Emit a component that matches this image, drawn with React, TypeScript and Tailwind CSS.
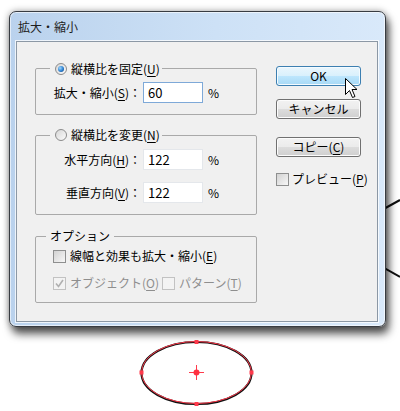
import React from 'react';

const U = ({ children }: { children: React.ReactNode }) => (
  <span className="underline decoration-1 underline-offset-[2px]">{children}</span>
);

const Radio = ({ checked }: { checked?: boolean }) => (
  <span className="inline-flex h-[12px] w-[12px] shrink-0 items-center justify-center rounded-full border border-[#8b8b8b] bg-[linear-gradient(135deg,#d6d6d6,#fbfbfb)]">
    {checked && (
      <span className="h-[6px] w-[6px] rounded-full bg-[radial-gradient(circle_at_35%_35%,#9fd8ff,#2a7fd0_55%,#0c3a75)]" />
    )}
  </span>
);

const Check = ({ checked, disabled }: { checked?: boolean; disabled?: boolean }) => (
  <span
    className={`inline-flex h-[13px] w-[13px] shrink-0 items-center justify-center border ${
      disabled
        ? 'border-[#c2c2c2] bg-[#f3f3f3]'
        : 'border-[#8e8f8f] bg-[linear-gradient(135deg,#d2d2d2,#f7f7f7)]'
    }`}
  >
    {checked && (
      <svg width="11" height="11" viewBox="0 0 11 11">
        <path d="M2 5.5 L4.5 8.5 L9 2" fill="none" stroke="#b0b0b0" strokeWidth="1.6" />
      </svg>
    )}
  </span>
);

const Field = ({ value, focused }: { value: string; focused?: boolean }) => (
  <div
    className={`ml-[2px] flex h-[21px] w-[60px] items-center bg-white pl-[4px] text-[13px] ${
      focused ? 'border border-[#7ea9d8]' : 'border border-[#e4e7eb]'
    }`}
  >
    {value}
  </div>
);

const Row = ({ label, value, focused }: { label: React.ReactNode; value: string; focused?: boolean }) => (
  <div className="flex h-[21px] items-center">
    <div className="w-[91px] whitespace-nowrap text-right">{label}</div>
    <Field value={value} focused={focused} />
    <span className="ml-[5px]">%</span>
  </div>
);

const Button = ({ children, hot }: { children: React.ReactNode; hot?: boolean }) => (
  <div
    className={`flex h-[20px] w-[85px] items-center justify-center rounded-[3px] border text-[12px] ${
      hot
        ? 'border-[#3c7fb1] bg-[linear-gradient(#eaf6fd_0%,#d9f0fc_50%,#bee6fd_50%,#a7d9f5_100%)] shadow-[inset_0_0_0_1px_#f4fbff]'
        : 'border-[#707070] bg-[linear-gradient(#f2f2f2_0%,#ebebeb_50%,#dddddd_50%,#cfcfcf_100%)] shadow-[inset_0_0_0_1px_#fcfcfc]'
    }`}
  >
    {children}
  </div>
);

const Cursor = () => (
  <svg className="absolute left-[345px] top-[78px] z-20" width="13" height="21" viewBox="0 0 13 21">
    <path d="M0.5 0.5 L0.5 16.5 L4.5 12.5 L7.5 19.5 L10 18.5 L7 11.5 L12 11.5 Z" fill="#fff" stroke="#000" strokeWidth="1" />
  </svg>
);

const Ellipse = () => (
  <svg className="ml-[124px] mt-[10px]" width="130" height="72" viewBox="0 0 130 72">
    <ellipse cx="63.5" cy="36" rx="55" ry="31" fill="none" stroke="#111" strokeWidth="2.2" />
    <ellipse cx="63.5" cy="35.5" rx="55" ry="31" fill="none" stroke="#ff3a4c" strokeWidth="1" />
    <rect x="61.5" y="3" width="4" height="4" fill="#ff3a4c" />
    <rect x="61.5" y="65" width="4" height="4" fill="#ff3a4c" />
    <rect x="6.5" y="33.5" width="4" height="4" fill="#ff3a4c" />
    <rect x="116.5" y="33.5" width="4" height="4" fill="#ff3a4c" />
    <line x1="56" y1="35.5" x2="71" y2="35.5" stroke="#ff3a4c" strokeWidth="1" />
    <line x1="63.5" y1="28" x2="63.5" y2="43" stroke="#ff3a4c" strokeWidth="1" />
    <circle cx="63.5" cy="35.5" r="3" fill="#ff3040" />
  </svg>
);

export default function App() {
  return (
    <div className="relative h-[411px] w-[400px] overflow-hidden bg-white pl-[9px] pt-[11px] font-['Noto_Sans_CJK_JP',sans-serif] text-[12px] leading-[16px] text-black">
      <svg className="pointer-events-none absolute left-0 top-0" width="400" height="411">
        <line x1="370" y1="216.5" x2="400" y2="200" stroke="#111" strokeWidth="2" />
        <line x1="370" y1="260" x2="400" y2="277" stroke="#111" strokeWidth="2" />
      </svg>

      <div className="relative z-10 flex h-[316px] w-[377px] flex-col rounded-[7px] border border-[#383c42] bg-[linear-gradient(90deg,#bad2ed,#cde1f6_55%,#d9e9fa)] shadow-[3px_7px_9px_rgba(0,0,0,0.65),0_0_7px_rgba(0,0,0,0.35),inset_0_0_0_1px_rgba(255,255,255,0.6)]">
        <div className="flex h-[29px] items-center pl-[8px] text-[12px] text-[#1e1e1e]">拡大・縮小</div>

        <div className="ml-[6px] flex h-[281px] w-[362px] border border-[#8c98a5] bg-[#f0f0f0] pl-[18px] shadow-[0_0_0_1px_rgba(255,255,255,0.75)]">
          <div className="flex w-[222px] flex-col pt-[17px]">
            <fieldset className="rounded-[2px] border border-[#a9a9a9] pb-[11px] pl-[14px] pr-[10px] pt-[5px]">
              <legend className="pl-[5px] pr-[2px]">
                <span className="inline-flex items-center gap-[4px]">
                  <Radio checked />
                  <span>縦横比を固定(<U>U</U>)</span>
                </span>
              </legend>
              <Row label={<>拡大・縮小(<U>S</U>)：</>} value="60" focused />
            </fieldset>

            <fieldset className="mt-[12px] rounded-[2px] border border-[#a9a9a9] pb-[11px] pl-[14px] pr-[10px] pt-[5px]">
              <legend className="pl-[5px] pr-[2px]">
                <span className="inline-flex items-center gap-[4px]">
                  <Radio />
                  <span>縦横比を変更(<U>N</U>)</span>
                </span>
              </legend>
              <div className="flex flex-col gap-[12px]">
                <Row label={<>水平方向(<U>H</U>)：</>} value="122" />
                <Row label={<>垂直方向(<U>V</U>)：</>} value="122" />
              </div>
            </fieldset>

            <fieldset className="mt-[13px] rounded-[2px] border border-[#a9a9a9] pb-[11px] pl-[10px] pr-[10px] pt-[4px]">
              <legend className="px-[4px]">オプション</legend>
              <div className="ml-[7px] flex flex-col gap-[11px]">
                <div className="flex h-[16px] items-center gap-[4px]">
                  <Check />
                  <span className="whitespace-nowrap">線幅と効果も拡大・縮小(<U>E</U>)</span>
                </div>
                <div className="flex h-[16px] items-center text-[#8e8e8e]">
                  <div className="flex w-[109px] items-center gap-[4px]">
                    <Check checked disabled />
                    <span className="whitespace-nowrap">オブジェクト(<U>O</U>)</span>
                  </div>
                  <div className="flex items-center gap-[4px]">
                    <Check disabled />
                    <span className="whitespace-nowrap">パターン(<U>T</U>)</span>
                  </div>
                </div>
              </div>
            </fieldset>
          </div>

          <div className="ml-[19px] flex w-[85px] flex-col pt-[24px]">
            <Button hot>OK</Button>
            <div className="mt-[13px]">
              <Button>キャンセル</Button>
            </div>
            <div className="mt-[18px]">
              <Button>
                <span>コピー(<U>C</U>)</span>
              </Button>
            </div>
            <div className="mt-[14px] flex items-center gap-[3px]">
              <Check />
              <span className="whitespace-nowrap">プレビュー(<U>P</U>)</span>
            </div>
          </div>
        </div>
      </div>

      <Ellipse />
      <Cursor />
    </div>
  );
}
